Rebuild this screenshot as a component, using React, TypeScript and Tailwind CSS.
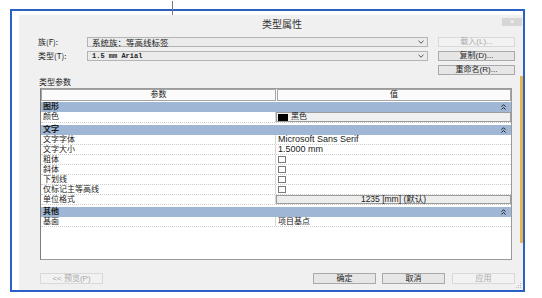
import React from "react";

const Chev = () => (
  <svg width="5" height="6" viewBox="0 0 5 6" className="shrink-0">
    <path d="M0.5 2.7L2.5 0.7L4.5 2.7M0.5 5.5L2.5 3.5L4.5 5.5" stroke="#222" fill="none" strokeWidth="1" />
  </svg>
);

const DownArrow = () => (
  <svg width="6" height="4" viewBox="0 0 6 4" className="shrink-0">
    <path d="M0.5 0.8L3 3.2L5.5 0.8" stroke="#555" fill="none" strokeWidth="1" />
  </svg>
);

function Section({ title, className = "" }: { title: string; className?: string }) {
  return (
    <div className={`h-[10px] bg-[#9fb7d4] flex items-center justify-between pl-[2px] pr-[5px] text-[8px] font-bold leading-none text-[#1a1a1a] ${className}`}>
      <span>{title}</span>
      <Chev />
    </div>
  );
}

function Row({ label, children, h = "h-[10px]" }: { label: string; children?: React.ReactNode; h?: string }) {
  return (
    <div className={`${h} flex border-b border-dotted border-[#cdcdcd] text-[8px] leading-none text-[#222]`}>
      <div className="w-[235px] pl-[2px] flex items-center border-r border-[#d6d6d6]">{label}</div>
      <div className="flex-1 flex items-center">{children}</div>
    </div>
  );
}

const Box = () => <div className="ml-[2px] w-[8px] h-[7px] border border-[#7a7a7a] bg-white" />;

function Btn({ children, disabled, w = "w-[77px]", h = "h-[10px]", className = "" }: { children: React.ReactNode; disabled?: boolean; w?: string; h?: string; className?: string }) {
  return (
    <div
      className={`${w} ${h} flex items-center justify-center text-[8px] leading-none border ${
        disabled ? "border-[#d9d9d9] bg-[#f2f2f2] text-[#a9a9a9]" : "border-[#a9a9a9] bg-[#e6e6e6] text-[#1e1e1e]"
      } ${className}`}
    >
      {children}
    </div>
  );
}

export default function App() {
  return (
    <div className="w-[542px] h-[298px] bg-white relative overflow-hidden font-['Liberation_Sans','Noto_Sans_CJK_SC',sans-serif]">
      <div className="absolute left-[172px] top-[1px] w-px h-[14px] bg-[#7a7a7a]" />
      <div className="mt-[9px] ml-[10px] w-[515px] h-[283px] border-2 border-[#2b61c4] pt-[4px] pl-[7px] bg-white">
        <div className="h-full bg-[#f0f0f0] flex flex-col">
          {/* title bar */}
          <div className="h-[17px] flex items-center">
            <div className="w-[243px]" />
            <div className="text-[10px] leading-none text-[#333] font-['Noto_Sans_CJK_SC',sans-serif]">类型属性</div>
            <div className="flex-1" />
            <div className="self-start mt-[3px] mr-[1px] w-[20px] h-[8px] bg-[#d6d6d6] flex items-center justify-center text-white text-[8px] leading-none">×</div>
          </div>
          <div className="pl-[19px] flex flex-col">
            <div className="mt-[5px] h-[10px] flex items-center">
              <div className="w-[49px] text-[8px] leading-none text-[#222] font-['Noto_Sans_CJK_SC',sans-serif]">族(F):</div>
              <div className="w-[341px] h-[10px] border border-[#b4b4b4] bg-[#ebebeb] flex items-center justify-between pl-[4px] pr-[3px]">
                <span className="text-[8.5px] leading-none text-[#1e1e1e] font-['Noto_Sans_CJK_SC',sans-serif]">系统族：等高线标签</span>
                <DownArrow />
              </div>
              <Btn disabled className="ml-[10px]">载入(L)...</Btn>
            </div>
            <div className="mt-[4px] h-[10px] flex items-center">
              <div className="w-[49px] text-[8px] leading-none text-[#222] font-['Noto_Sans_CJK_SC',sans-serif]">类型(T):</div>
              <div className="w-[341px] h-[10px] border border-[#b4b4b4] bg-[#ebebeb] flex items-center justify-between pl-[4px] pr-[3px]">
                <span className="text-[7px] leading-none font-bold text-[#1e1e1e] font-['Liberation_Mono',monospace]">1.5 mm Arial</span>
                <DownArrow />
              </div>
              <Btn className="ml-[10px]">复制(D)...</Btn>
            </div>
            <div className="mt-[4px] h-[10px] flex items-center">
              <div className="w-[400px]" />
              <Btn>重命名(R)...</Btn>
            </div>
            <div className="mt-[4px] h-[8px] flex items-center text-[8px] leading-none text-[#222] pl-px">类型参数</div>
            {/* table */}
            <div className="mt-[1px] ml-[2px] w-[472px] h-[172px] border border-[#9a9a9a] border-l-[#7c7c7c] bg-white flex flex-col">
              <div className="h-[12px] flex text-[8px] leading-none text-[#222]">
                <div className="w-[235px] border border-[#a5a5a5] bg-[#fbfbfb] flex items-center justify-center">参数</div>
                <div className="flex-1 ml-px border border-[#a5a5a5] bg-[#fbfbfb] flex items-center justify-center">值</div>
              </div>
              <Section title="图形" className="mt-px" />
              <Row label="颜色" h="h-[11px]">
                <div className="w-full h-full border border-[#9c9c9c] bg-[#f0f0f0] flex items-center pl-[1px] gap-[3px]">
                  <div className="w-[10px] h-[7px] bg-black" />
                  <span>黑色</span>
                </div>
              </Row>
              <Section title="文字" className="mt-[2px]" />
              <Row label="文字字体">
                <span className="pl-[2px] text-[9px] text-[#222] font-['Liberation_Sans',sans-serif]">Microsoft Sans Serif</span>
              </Row>
              <Row label="文字大小">
                <span className="pl-[2px] text-[9px] text-[#222] font-['Liberation_Sans',sans-serif]">1.5000 mm</span>
              </Row>
              <Row label="粗体"><Box /></Row>
              <Row label="斜体"><Box /></Row>
              <Row label="下划线"><Box /></Row>
              <Row label="仅标记主等高线"><Box /></Row>
              <Row label="单位格式">
                <div className="w-full h-full border border-[#9c9c9c] bg-[#ededed] flex items-center justify-center">
                  <span className="text-[8.5px] text-[#222]">1235 [mm] (默认)</span>
                </div>
              </Row>
              <Section title="其他" className="mt-[2px]" />
              <Row label="基面">
                <span className="pl-[2px]">项目基点</span>
              </Row>
            </div>
            {/* bottom buttons */}
            <div className="mt-[13px] h-[11px] flex items-center">
              <Btn disabled w="w-[63px]" h="h-[11px]" className="ml-[2px]">&lt;&lt; 预览(P)</Btn>
              <Btn w="w-[63px]" h="h-[11px]" className="ml-[210px]">确定</Btn>
              <Btn w="w-[63px]" h="h-[11px]" className="ml-[6px]">取消</Btn>
              <Btn disabled w="w-[63px]" h="h-[11px]" className="ml-[7px]">应用</Btn>
            </div>
          </div>
        </div>
      </div>
      <div className="absolute left-[520px] top-[76px] w-[3px] h-[167px] bg-[#e5b54e]" />
      <svg className="absolute left-[516px] top-[283px]" width="6" height="6" viewBox="0 0 6 6">
        <rect x="4" y="0" width="1" height="1" fill="#bbb" />
        <rect x="2" y="2" width="1" height="1" fill="#bbb" />
        <rect x="4" y="2" width="1" height="1" fill="#bbb" />
        <rect x="0" y="4" width="1" height="1" fill="#bbb" />
        <rect x="2" y="4" width="1" height="1" fill="#bbb" />
        <rect x="4" y="4" width="1" height="1" fill="#bbb" />
      </svg>
    </div>
  );
}
